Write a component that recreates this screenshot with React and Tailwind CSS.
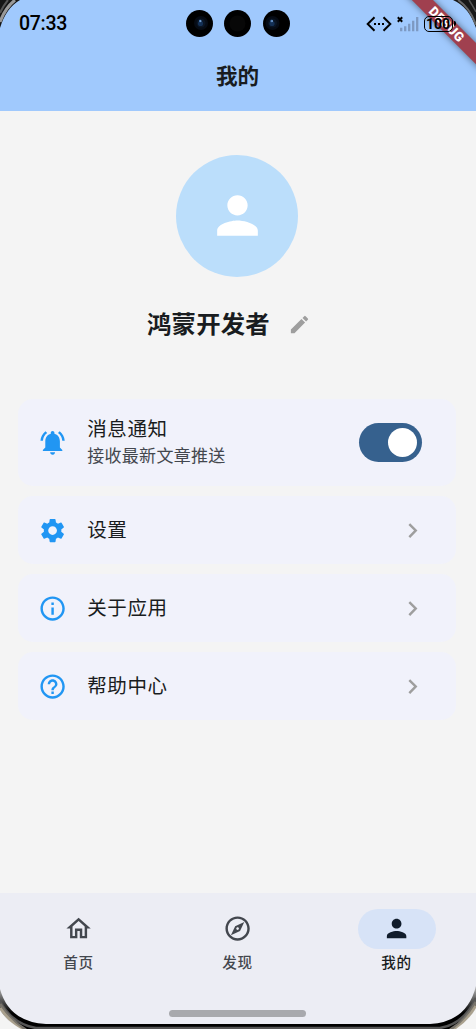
import {
  MdChevronRight,
  MdEdit,
  MdHelpOutline,
  MdInfoOutline,
  MdNotificationsActive,
  MdOutlineExplore,
  MdOutlineHome,
  MdPerson,
  MdSettings,
} from 'react-icons/md';

const menuItems = [
  { label: '设置', icon: MdSettings },
  { label: '关于应用', icon: MdInfoOutline },
  { label: '帮助中心', icon: MdHelpOutline },
];

const tabs = [
  { label: '首页', icon: MdOutlineHome },
  { label: '发现', icon: MdOutlineExplore },
  { label: '我的', icon: MdPerson, active: true },
];

function Camera({ lens }) {
  return (
    <svg className="size-[27px]" viewBox="0 0 27 27">
      <circle cx="13.5" cy="13.5" r="13.5" fill="#000" />
      {lens ? (
        <g transform={`translate(${lens} 13)`}>
          <circle r="7" fill="#060b14" />
          <circle r="4.5" fill="#0a1524" />
          <circle cx="-0.5" cy="0.5" r="2.6" fill="#143055" />
          <circle cx="-0.8" cy="-2" r="1.3" fill="#4a7ab4" />
          <circle cx="-0.3" cy="-2" r="0.6" fill="#a9cdf0" />
        </g>
      ) : (
        <circle cx="13.5" cy="13.5" r="8" fill="#070707" />
      )}
    </svg>
  );
}

function StatusBar() {
  return (
    <div className="relative z-20 flex h-[47px] items-center text-black">
      <span className="w-[186px] pl-[19px] font-['Roboto','Liberation_Sans',sans-serif] text-[19.5px] leading-none font-medium tracking-[-0.3px]">
        07:33
      </span>
      <div className="flex gap-[11.4px]">
        <Camera lens={15} />
        <Camera />
        <Camera lens={9.5} />
      </div>
      <div className="ml-auto flex items-center pr-[20.5px]">
        <svg className="h-[16px] w-[26px]" viewBox="0 0 26 16" fill="none" stroke="#000" strokeWidth="2">
          <path d="M8.5 1.2L1.7 8l6.8 6.8M17.5 1.2L24.3 8l-6.8 6.8" />
          <path d="M8 8h2M12 8h2M16 8h2" />
        </svg>
        <svg className="ml-[5px] h-[16px] w-[22px]" viewBox="0 0 22 16">
          <path d="M.8 1.3l4.4 4.4M5.2 1.3L.8 5.7" stroke="#000" strokeWidth="2" />
          <path
            d="M4.2 15.2v-3.5M8.2 15.2v-5M12.2 15.2V7.8M16.2 15.2V4.8M20.2 15.2V1"
            stroke="#7d99c2"
            strokeWidth="2.3"
          />
        </svg>
        <div className="ml-[5px] flex h-[16px] w-[29px] items-center justify-center rounded-[5px] border-[1.5px] border-black font-['Roboto','Liberation_Sans',sans-serif] text-[14px] leading-none font-bold">
          100
        </div>
        <div className="ml-px h-[5px] w-[2px] rounded-r-sm bg-black" />
      </div>
    </div>
  );
}

function DebugBanner() {
  return (
    <div className="absolute top-[17px] left-[387px] z-10 flex h-[14.5px] w-[120px] rotate-45 items-center justify-center bg-[#a0404f] font-['Roboto','Liberation_Sans',sans-serif] text-[13px] leading-none font-black tracking-[0.5px] text-white shadow-[0_0_7px_rgba(0,0,0,0.5)]">
      DEBUG
    </div>
  );
}

function Card({ icon: Icon, className, children }) {
  return (
    <div className={`flex items-center rounded-[15px] bg-[#f1f2fb] pl-[20px] ${className}`}>
      <Icon className="mt-px size-[29.2px] shrink-0 text-[#2196f3]" />
      <div className="ml-[20px] flex flex-1 items-center justify-between">{children}</div>
    </div>
  );
}

function NavTab({ label, icon: Icon, active }) {
  return (
    <div className="flex w-[159px] shrink-0 flex-col items-center pt-[16px]">
      <div
        className={`flex h-[40px] w-[78px] items-center justify-center rounded-full ${
          active ? 'bg-[#d7e3f7] text-[#101c2b]' : 'text-[#43474e]'
        }`}
      >
        <Icon className="mt-px size-[29.2px]" />
      </div>
      <span
        className={`mt-[3px] text-[14.6px] leading-[20px] font-medium tracking-[0.6px] ${
          active ? 'text-[#191c20]' : 'text-[#43474e]'
        }`}
      >
        {label}
      </span>
    </div>
  );
}

// Rounded bezel of the phone, laid over the corners of the screen
function Bezel() {
  return (
    <svg className="pointer-events-none absolute inset-0 z-30 h-[1029px] w-[476px]" viewBox="0 0 476 1029" fill="none">
      <defs>
        <linearGradient id="edge" gradientUnits="userSpaceOnUse" x1="0" y1="989" x2="0" y2="1029">
          <stop offset="0" stopColor="#aaa" />
          <stop offset="0.4" stopColor="#333" />
          <stop offset="0.6" stopColor="#000" />
          <stop offset="1" stopColor="#000" />
        </linearGradient>
      </defs>
      <path d="M0 0H20Q6 8 0 28Z" fill="#151515" />
      <path d="M0 22Q5 8 15 0" stroke="#999" strokeWidth="3" />
      <path d="M0 13Q3 6 8 0" stroke="#555" strokeWidth="2" />
      <path d="M476 0H453Q469 7 476 28Z" fill="#171717" />
      <path d="M476 25Q470 8 458 0" stroke="#666" strokeWidth="2" />
      <path d="M476 12Q473 6 469 0" stroke="#555" strokeWidth="1.5" />

      <path d="M0 989Q9 1022 46 1024H430Q467 1022 476 986V1029H0Z" fill="url(#edge)" />
      <path d="M0 1001Q12 1024 36 1028H440Q464 1024 476 998" stroke="#555" strokeWidth="2.5" />
      <path d="M0 1004Q9 1020 26 1030M476 1002Q467 1020 450 1030" stroke="#77736b" strokeWidth="3" />
      <path d="M0 1008Q9 1021 23 1031M476 1006Q467 1021 453 1031" stroke="#aaa18e" strokeWidth="3" />
      <path d="M0 1010Q7 1021 21 1029H0ZM476 1008Q469 1020 456 1029H476Z" fill="#f4f4f4" />
    </svg>
  );
}

export default function App() {
  return (
    <div className="relative flex h-[1029px] w-[476px] flex-col overflow-hidden bg-[#f4f4f4] font-['Noto_Sans_CJK_SC',sans-serif] text-[#191c20]">
      <DebugBanner />
      <header className="h-[110.5px] bg-[#a0c9fd]">
        <StatusBar />
        <h1 className="pt-[12px] pr-px text-center text-[21.6px] leading-[32px] font-bold">我的</h1>
      </header>

      <main className="flex flex-1 flex-col pr-[20px] pl-[18px]">
        <div className="mx-auto mt-[44px] flex size-[122px] items-center justify-center rounded-full bg-[#bbdefb]">
          <MdPerson className="size-[61px] text-white" />
        </div>
        <div className="mt-[28px] flex items-center pl-[129px]">
          <h2 className="text-[24.4px] leading-[36px] font-bold tracking-[0.2px]">鸿蒙开发者</h2>
          <MdEdit className="mt-[3px] ml-[18px] size-[23px] text-[#9e9e9e]" />
        </div>

        <div className="mt-[58.5px] flex flex-col gap-[10px]">
          <Card icon={MdNotificationsActive} className="h-[87px]">
            <div className="-mt-[3px]">
              <div className="text-[19.5px] leading-[28px] tracking-[0.6px]">消息通知</div>
              <div className="text-[17px] leading-[26px] tracking-[0.3px] text-[#43474e]">接收最新文章推送</div>
            </div>
            <button className="mr-[34px] flex h-[39px] w-[63.5px] items-center justify-end rounded-full bg-[#36618e] pr-[5px]">
              <span className="size-[29.3px] rounded-full bg-white" />
            </button>
          </Card>
          {menuItems.map(({ label, icon }) => (
            <Card key={label} icon={icon} className="h-[68px]">
              <span className="-mt-[4px] text-[19.5px] leading-[29px] tracking-[0.6px]">{label}</span>
              <MdChevronRight className="mt-px mr-[29px] size-[29.2px] text-[#9e9e9e]" />
            </Card>
          ))}
        </div>
      </main>

      <nav className="flex h-[136.5px] flex-col bg-[#ecedf4] pr-px">
        <div className="flex justify-center">
          {tabs.map((tab) => (
            <NavTab key={tab.label} {...tab} />
          ))}
        </div>
        <div className="mx-auto mt-[38.5px] h-[6.5px] w-[137px] rounded-full bg-[#a8a9ad]" />
      </nav>
      <Bezel />
    </div>
  );
}
